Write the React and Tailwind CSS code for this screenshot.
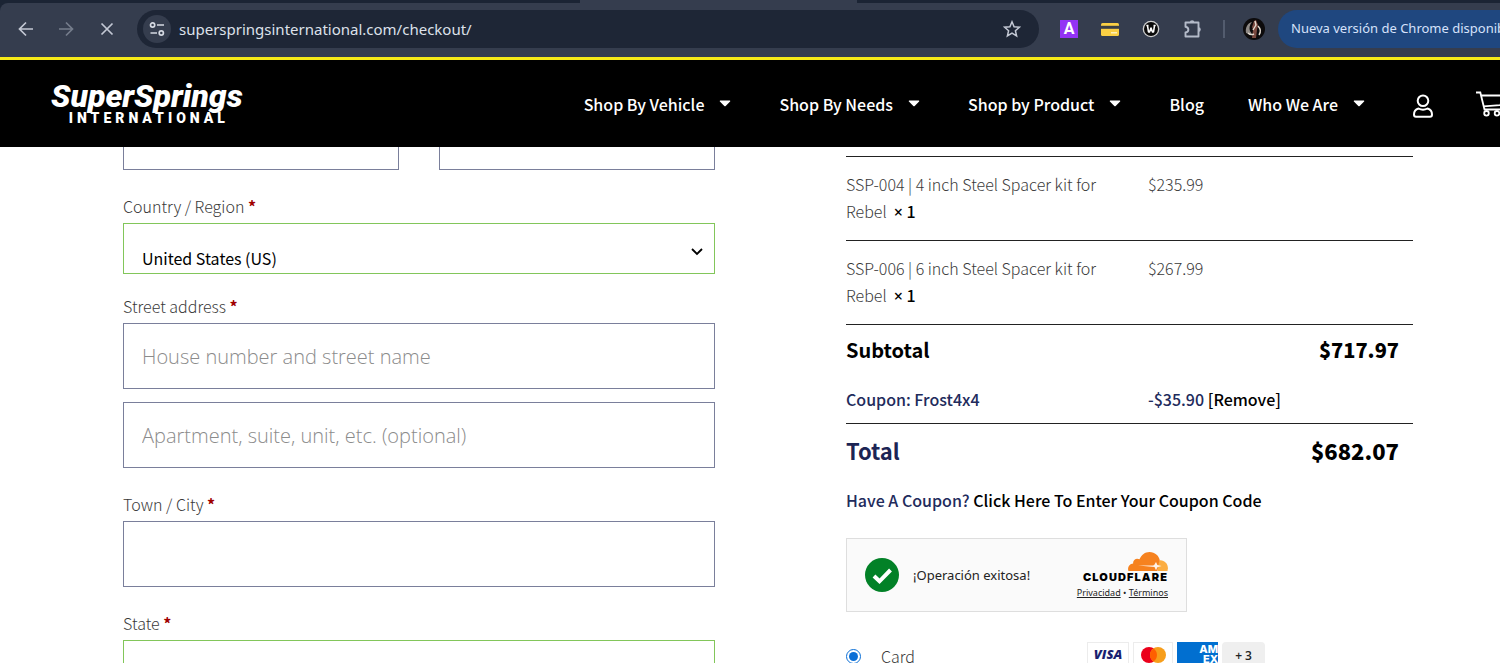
import React, { useState } from 'react'

const Caret = () => (
  <svg viewBox="0 0 12 7" className="w-3 h-[7px] fill-white">
    <path d="M1.4 0.4h9.2c.6 0 .9.7.5 1.1L6.7 5.9c-.4.4-1 .4-1.4 0L.9 1.500C.5 1.100.8.4 1.400.4z" />
  </svg>
)

const BackIcon = () => (
  <svg viewBox="0 0 16 16" className="w-4 h-4 stroke-[#c3c8d4] fill-none" strokeWidth="1.7">
    <path d="M15 8H2M8 1.500L1.500 8L8 14.500" />
  </svg>
)

const ForwardIcon = () => (
  <svg viewBox="0 0 16 16" className="w-4 h-4 stroke-[#757d8c] fill-none" strokeWidth="1.7">
    <path d="M1 8H14M8 1.500L14.500 8L8 14.500" />
  </svg>
)

const StopIcon = () => (
  <svg viewBox="0 0 16 16" className="w-4 h-4 stroke-[#c3c8d4] fill-none" strokeWidth="1.7">
    <path d="M2.500 2.500L13.500 13.500M13.500 2.500L2.500 13.500" />
  </svg>
)

const TuneIcon = () => (
  <svg viewBox="0 0 16 16" className="w-4 h-4 stroke-[#d5d9e2] fill-none" strokeWidth="1.7">
    <circle cx="3.600" cy="4" r="2.100" />
    <path d="M8 4H15M1.500 12H8" />
    <circle cx="12.300" cy="12" r="2.100" />
  </svg>
)

const StarIcon = () => (
  <svg viewBox="0 0 18 18" className="w-[18px] h-[18px] stroke-[#c3c8d4] fill-none" strokeWidth="1.5">
    <path d="M9 1.800l2.100 4.900 5.300.5-4 3.500 1.200 5.200L9 13.100l-4.600 2.800 1.200-5.200-4-3.500 5.300-.5z" />
  </svg>
)

const CardExtensionIcon = () => (
  <svg viewBox="0 0 18 13" className="w-[18px] h-[13px]">
    <rect width="18" height="13" rx="1.500" fill="#fbd044" />
    <rect y="2.800" width="18" height="3" fill="#3b3f45" />
    <rect x="10" y="9" width="6" height="1.500" fill="#fff0b8" />
  </svg>
)

const WordIcon = () => (
  <svg viewBox="0 0 18 18" className="w-[18px] h-[18px]">
    <circle cx="9" cy="9" r="8.300" fill="#d0d0d0" />
    <circle cx="9" cy="9" r="7" fill="#0a0a0a" />
    <path d="M4.300 5.500h2.200M11.500 5.500h2.200M5.500 5.500l1 6.500h1L9 8l1.500 4h1l1-6.500" fill="none" stroke="#fff" strokeWidth="1.600" strokeLinejoin="round" />
  </svg>
)

const PuzzleIcon = () => (
  <svg viewBox="0 0 20 20" className="w-5 h-5 stroke-[#b4bbc9] fill-none" strokeWidth="1.900">
    <path d="M2.500 3.500H15.500V17.500H2.500V13.500C6.300 12.800 6.300 8.500 2.500 7.800z" strokeLinejoin="round" />
    <path d="M6.800 3.500a2.300 2.300 0 0 1 4.600 0zM15.500 8.300a2.300 2.300 0 0 1 0 4.600z" fill="#b4bbc9" stroke="none" />
  </svg>
)

const AvatarIcon = () => (
  <svg viewBox="0 0 22 22" className="w-[22px] h-[22px]">
    <circle cx="11" cy="11" r="11" fill="#0d0b0c" />
    <path d="M3 15C2 9 5 5 9 4C6.500 7 6 10 7 13l2 3H6z" fill="#8f8a86" />
    <path d="M11 3l2-1 2 5-1 5-1 8H9l1-8-1-3z" fill="#7b4a40" />
    <path d="M12 3l1 4-3 5M15 8c3 3 3 6 1 9M5 15c2 2 4 2 6 1" fill="none" stroke="#e2dad0" strokeWidth="1.400" />
  </svg>
)

const UserIcon = () => (
  <svg viewBox="0 0 20 24" className="w-5 h-6 fill-none stroke-white" strokeWidth="2">
    <circle cx="10" cy="6.800" r="5.300" />
    <path d="M5.500 14.500C2.700 15.300 1 17.700 1 20.500c0 1.500.6 2.200 2 2.200h14c1.400 0 2-.7 2-2.200c0-2.800-1.700-5.200-4.500-6c-2.700 1.500-6.300 1.500-9 0z" strokeLinejoin="round" />
  </svg>
)

const CartIcon = () => (
  <svg viewBox="0 0 28 26" className="w-7 h-[26px] fill-none stroke-white" strokeWidth="1.800">
    <path d="M0 1.500h4.300L8.500 18.500h17M5.200 4.500H27l-2.500 9.500L7.600 15.300" />
    <circle cx="10.500" cy="22.300" r="2.300" />
    <circle cx="21" cy="22.300" r="2.300" />
  </svg>
)

const CloudIcon = () => (
  <svg viewBox="0 0 40 19" className="w-10 h-[19px]">
    <path d="M30 19V10.500l2-2.300c4.500-.2 8 3.500 7.900 8.300L39.500 19z" fill="#fbad41" />
    <path d="M.2 18.500c-.7-3.800 1.700-6.700 5-6.900C4.500 8.200 8.200 5.400 11.500 7.300C13.500 2.800 17 0 21.500 0c5.500 0 9.300 3.600 10.300 8.300l-1 2.700L29.500 19H.6z" fill="#f6821f" />
    <path d="M10 13.500h15l1.200-.5L28 10l1.400 3 4.200 1.100-4.200 1.100-1.400 3-1.500-3.200z" fill="#fff" opacity=".9" />
  </svg>
)

const CheckIcon = () => (
  <svg viewBox="0 0 34 34" className="w-[34px] h-[34px]">
    <circle cx="17" cy="17" r="17" fill="#028127" />
    <path d="M9 18l5.500 5.300L25.500 12" fill="none" stroke="#fff" strokeWidth="4" />
  </svg>
)

const navItems = [
  { label: 'Shop By Vehicle', menu: true },
  { label: 'Shop By Needs', menu: true },
  { label: 'Shop by Product', menu: true },
  { label: 'Blog', menu: false },
  { label: 'Who We Are', menu: true },
]

const products = [
  { id: 'ssp-004', name: 'SSP-004 | 4 inch Steel Spacer kit for Rebel', qty: 1, price: '$235.99' },
  { id: 'ssp-006', name: 'SSP-006 | 6 inch Steel Spacer kit for Rebel', qty: 1, price: '$267.99' },
]

const inputClass =
  "block w-full h-[66px] px-[18px] border border-[#7a7f9b] bg-white font-['Open_Sans',sans-serif] font-light text-xl text-black placeholder:text-[#8b8b8b] outline-none"

const Label = ({ htmlFor, children }) => (
  <label htmlFor={htmlFor} className="block mb-[5px] text-base leading-6 font-light text-[#3a3a3a]">
    {children} <span className="font-bold text-[#a00000]">*</span>
  </label>
)

const BrowserBar = () => (
  <div className="bg-[#1b2434]">
    <div className="flex h-[3px]">
      <div className="w-[277px] ml-[580px] bg-[#353d4e]" />
    </div>
    <div className="flex items-center h-[54px] pb-0.5 bg-[#353d4e] rounded-tl-lg pl-[18px] overflow-hidden">
      <button aria-label="Back"><BackIcon /></button>
      <button aria-label="Forward" className="ml-6"><ForwardIcon /></button>
      <button aria-label="Stop" className="ml-[25px]"><StopIcon /></button>
      <div className="flex flex-1 items-center h-[38px] ml-[22px] pl-1.5 pr-[18px] rounded-full bg-[#1e2636]">
        <button aria-label="Site information" className="flex items-center justify-center w-7 h-7 rounded-full bg-[#353d4e]">
          <TuneIcon />
        </button>
        <input
          aria-label="Address"
          defaultValue="superspringsinternational.com/checkout/"
          className="flex-1 ml-2 bg-transparent font-['Noto_Sans',sans-serif] text-[15px] text-[#dde1ea] outline-none"
        />
        <button aria-label="Bookmark"><StarIcon /></button>
      </div>
      <div className="flex items-center gap-[23px] ml-[21px] shrink-0">
        <span className="flex items-center justify-center w-[18px] h-[18px] bg-[#9333f5] font-['Roboto',sans-serif] font-bold text-base leading-none text-white">A</span>
        <CardExtensionIcon />
        <WordIcon />
        <PuzzleIcon />
      </div>
      <div className="w-0.5 h-[18px] ml-5 bg-[#535c6e]" />
      <div className="ml-[18px] shrink-0"><AvatarIcon /></div>
      <button className="w-[222px] h-[38px] ml-[13px] pl-[13px] rounded-l-full bg-[#1f477f] text-left whitespace-nowrap font-['Noto_Sans',sans-serif] text-[13px] text-[#d6e2fb] overflow-hidden">
        Nueva versión de Chrome disponible
      </button>
    </div>
  </div>
)

const Header = () => (
  <header className="relative z-10 flex items-center h-[90px] bg-black border-t-[3px] border-[#f7ea18] pl-[51px] shrink-0 overflow-hidden">
    <a href="#home" className="flex flex-col items-center text-white font-['Roboto',sans-serif] font-black">
      <span className="text-[32px] leading-7 italic">SuperSprings</span>
      <span className="pl-1 text-sm leading-4 tracking-[4px]">INTERNATIONAL</span>
    </a>
    <nav className="flex items-center ml-auto text-base font-medium text-white whitespace-nowrap">
      {navItems.map(item => (
        <a key={item.label} href="#menu" className={item.menu ? 'flex items-center gap-[15px] mr-12' : 'mr-11'}>
          {item.label}
          {item.menu && <Caret />}
        </a>
      ))}
    </nav>
    <a href="#account" aria-label="Account" className="pt-1"><UserIcon /></a>
    <a href="#cart" aria-label="Cart" className="ml-[43px] -mr-1"><CartIcon /></a>
  </header>
)

const BillingForm = () => (
  <form>
    <div className="grid grid-cols-2 gap-10 -mt-[43px] mb-6">
      <input aria-label="First name" className={inputClass} />
      <input aria-label="Last name" className={inputClass} />
    </div>
    <div className="mb-5">
      <Label htmlFor="country">Country / Region</Label>
      <div className="relative">
        <select id="country" className="block w-full h-[51px] pt-5 px-[18px] border border-[#82c65a] bg-white text-base leading-[27px] text-black appearance-none outline-none">
          <option>United States (US)</option>
        </select>
        <svg viewBox="0 0 12 8" className="absolute right-3 top-[25px] w-3 h-2 fill-none stroke-black pointer-events-none" strokeWidth="1.8">
          <path d="M1 1l5 5 5-5" />
        </svg>
      </div>
    </div>
    <div className="mb-6">
      <Label htmlFor="street">Street address</Label>
      <input id="street" placeholder="House number and street name" className={inputClass} />
      <input aria-label="Apartment" placeholder="Apartment, suite, unit, etc. (optional)" className={inputClass + ' mt-[13px]'} />
    </div>
    <div className="mb-6">
      <Label htmlFor="city">Town / City</Label>
      <input id="city" className={inputClass} />
    </div>
    <div>
      <Label htmlFor="state">State</Label>
      <select id="state" className="block w-full h-[51px] px-[18px] border border-[#82c65a] bg-white appearance-none outline-none" />
    </div>
  </form>
)

const OrderTable = () => (
  <table className="w-full mt-[9px] table-fixed border-separate border-spacing-0 border-t border-[#222] text-base leading-[27px] text-left">
    <colgroup>
      <col className="w-[302px]" />
      <col />
    </colgroup>
    <tbody>
      {products.map(product => (
        <tr key={product.id} className="align-top font-light text-[#3a3a3a]">
          <td className="pt-[14px] pb-[15px] pr-10 border-b border-[#222]">
            {product.name}&nbsp;{' '}
            <strong className="font-medium text-black">
              <span className="font-['Noto_Sans',sans-serif] leading-none">×</span> {product.qty}
            </strong>
          </td>
          <td className="pt-[14px] pb-[15px] border-b border-[#222]">{product.price}</td>
        </tr>
      ))}
      <tr className="h-[50px] text-xl font-bold text-black">
        <th>Subtotal</th>
        <td className="pr-[14px] text-right font-black">$717.97</td>
      </tr>
      <tr className="h-[49px] font-medium text-[#222b5c]">
        <th className="border-b border-[#222] font-medium">Coupon: Frost4x4</th>
        <td className="border-b border-[#222]">
          -$35.90 <a href="#remove" className="text-black">[Remove]</a>
        </td>
      </tr>
      <tr className="h-[53px] text-[22px] font-bold">
        <th className="text-[#1c2454]">Total</th>
        <td className="pr-[14px] text-right font-black text-black">$682.07</td>
      </tr>
    </tbody>
  </table>
)

const Verification = () => (
  <div className="flex items-center w-[341px] h-[74px] mt-6 px-[18px] border border-[#dedede] bg-[#fafafa]">
    <CheckIcon />
    <span className="ml-[14px] pt-0.5 font-['Noto_Sans',sans-serif] text-[13px] text-[#232323]">¡Operación exitosa!</span>
    <div className="flex flex-col items-end ml-auto text-[#232323]">
      <CloudIcon />
      <span className="font-['Inter',sans-serif] font-black text-[11px] leading-3 tracking-widest text-black">CLOUDFLARE</span>
      <div className="mt-1 font-['Noto_Sans',sans-serif] text-[9px] leading-3">
        <a href="#privacy" className="underline">Privacidad</a> • <a href="#terms" className="underline">Términos</a>
      </div>
    </div>
  </div>
)

const PaymentMethod = () => {
  const [method, setMethod] = useState('card')
  return (
    <div className="flex items-center h-7 mt-[30px]">
      <input
        id="card"
        type="radio"
        name="payment"
        checked={method === 'card'}
        onChange={() => setMethod('card')}
        className="w-[15px] h-[15px] accent-[#0b6fd6]"
      />
      <label htmlFor="card" className="ml-5 text-base leading-[27px] font-light text-[#3a3a3a]">Card</label>
      <div className="flex items-start gap-1 ml-[172px]">
        <span className="flex items-center justify-center w-[42px] h-7 pb-0.5 border border-[#ececec] bg-white font-['Open_Sans',sans-serif] font-extrabold italic text-[13px] text-[#1a1f71]">VISA</span>
        <svg viewBox="0 0 40 28" className="w-10 h-7">
          <rect x=".5" y=".5" width="39" height="27" fill="#fff" stroke="#ececec" />
          <circle cx="16" cy="13" r="8" fill="#eb001b" />
          <circle cx="25" cy="13" r="8" fill="#f79e1b" />
          <path d="M20.500 6.400a8 8 0 0 1 0 13.200a8 8 0 0 1 0-13.200z" fill="#ff5f00" />
        </svg>
        <span className="flex flex-col items-end justify-center w-[41px] h-7 pb-1 bg-[#016fd0] font-['Inter',sans-serif] font-extrabold text-[11px] leading-[10px] text-white">
          <span>AM</span>
          <span>EX</span>
        </span>
        <span className="flex items-center justify-center w-[43px] h-7 bg-[#efefef] rounded-sm font-['Open_Sans',sans-serif] font-semibold text-xs text-[#222]">+ 3</span>
      </div>
    </div>
  )
}

const App = () => (
  <div className="flex flex-col h-screen overflow-hidden bg-white font-['Noto_Sans_CJK_SC',sans-serif]">
    <BrowserBar />
    <Header />
    <main className="grid grid-cols-[592fr_567fr] gap-[131px] pl-[123px] pr-[87px]">
      <BillingForm />
      <section>
        <OrderTable />
        <p className="mt-2.5 text-base leading-[27px] font-medium text-[#222b5c]">
          Have A Coupon? <a href="#coupon" className="text-black">Click Here To Enter Your Coupon Code</a>
        </p>
        <Verification />
        <PaymentMethod />
      </section>
    </main>
  </div>
)

export default App
